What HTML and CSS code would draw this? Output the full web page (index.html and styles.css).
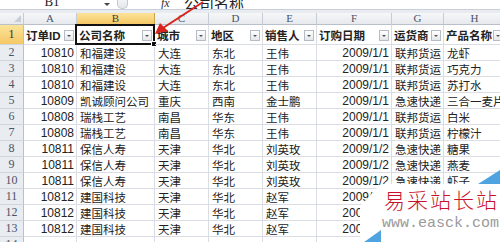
FILE: index.html
```html
<!DOCTYPE html>
<html lang="zh">
<head>
<meta charset="utf-8">
<link rel="stylesheet" href="styles.css">
</head>
<body>
<div class="app">
  <div class="fbar">
    <div class="namebox">B1</div>
    <div class="nb-arrow"></div>
    <div class="splitter"></div>
    <div class="fx">fx</div>
    <div class="fcontent">公司名称</div>
  </div>
  <div class="band"></div>
  <div class="sheet">
    <div class="ch corner"><span class="tri"></span></div>
    <div class="ch">A</div><div class="ch sel">B</div><div class="ch">C</div><div class="ch">D</div><div class="ch">E</div><div class="ch">F</div><div class="ch">G</div><div class="ch">H</div>

    <div class="rh sel">1</div>
    <div class="c hd"><span>订单ID</span><i class="dd"></i></div>
    <div class="c hd active"><span>公司名称</span><i class="dd"></i><b class="selbox"><b class="handle"></b></b></div>
    <div class="c hd"><span>城市</span><i class="dd"></i></div>
    <div class="c hd"><span>地区</span><i class="dd"></i></div>
    <div class="c hd"><span>销售人</span><i class="dd"></i></div>
    <div class="c hd"><span>订购日期</span><i class="dd"></i></div>
    <div class="c hd"><span>运货商</span><i class="dd"></i></div>
    <div class="c hd"><span>产品名称</span><i class="dd"></i></div>

    <div class="rh">2</div><div class="c n">10810</div><div class="c">和福建设</div><div class="c">大连</div><div class="c">东北</div><div class="c">王伟</div><div class="c n">2009/1/1</div><div class="c">联邦货运</div><div class="c">龙虾</div>
    <div class="rh">3</div><div class="c n">10810</div><div class="c">和福建设</div><div class="c">大连</div><div class="c">东北</div><div class="c">王伟</div><div class="c n">2009/1/1</div><div class="c">联邦货运</div><div class="c">巧克力</div>
    <div class="rh">4</div><div class="c n">10810</div><div class="c">和福建设</div><div class="c">大连</div><div class="c">东北</div><div class="c">王伟</div><div class="c n">2009/1/1</div><div class="c">联邦货运</div><div class="c">苏打水</div>
    <div class="rh">5</div><div class="c n">10809</div><div class="c">凯诚顾问公司</div><div class="c">重庆</div><div class="c">西南</div><div class="c">金士鹏</div><div class="c n">2009/1/1</div><div class="c">急速快递</div><div class="c">三合一麦片</div>
    <div class="rh">6</div><div class="c n">10808</div><div class="c">瑞栈工艺</div><div class="c">南昌</div><div class="c">华东</div><div class="c">王伟</div><div class="c n">2009/1/1</div><div class="c">联邦货运</div><div class="c">白米</div>
    <div class="rh">7</div><div class="c n">10808</div><div class="c">瑞栈工艺</div><div class="c">南昌</div><div class="c">华东</div><div class="c">王伟</div><div class="c n">2009/1/1</div><div class="c">联邦货运</div><div class="c">柠檬汁</div>
    <div class="rh">8</div><div class="c n">10811</div><div class="c">保信人寿</div><div class="c">天津</div><div class="c">华北</div><div class="c">刘英玫</div><div class="c n">2009/1/2</div><div class="c">急速快递</div><div class="c">糖果</div>
    <div class="rh">9</div><div class="c n">10811</div><div class="c">保信人寿</div><div class="c">天津</div><div class="c">华北</div><div class="c">刘英玫</div><div class="c n">2009/1/2</div><div class="c">急速快递</div><div class="c">燕麦</div>
    <div class="rh">10</div><div class="c n">10811</div><div class="c">保信人寿</div><div class="c">天津</div><div class="c">华北</div><div class="c">刘英玫</div><div class="c n">2009/1/2</div><div class="c">急速快递</div><div class="c">虾子</div>
    <div class="rh">11</div><div class="c n">10812</div><div class="c">建国科技</div><div class="c">天津</div><div class="c">华北</div><div class="c">赵军</div><div class="c n">2009/1/2</div><div class="c"></div><div class="c"></div>
    <div class="rh">12</div><div class="c n">10812</div><div class="c">建国科技</div><div class="c">天津</div><div class="c">华北</div><div class="c">赵军</div><div class="c n">2009/1/2</div><div class="c"></div><div class="c"></div>
    <div class="rh">13</div><div class="c n">10812</div><div class="c">建国科技</div><div class="c">天津</div><div class="c">华北</div><div class="c">赵军</div><div class="c n">2009/1/2</div><div class="c"></div><div class="c"></div>
    <div class="rh">14</div><div class="c n"></div><div class="c"></div><div class="c"></div><div class="c"></div><div class="c"></div><div class="c"></div><div class="c"></div><div class="c"></div>
  </div>

  <svg class="arrow" width="500" height="242" viewBox="0 0 500 242">
    <line x1="203" y1="2" x2="163" y2="28" stroke="#d8231f" stroke-width="2"/>
    <polygon points="155,34 160,23 168,31" fill="#d8231f"/>
  </svg>

  <div class="watermark">
    <svg class="wm-bg" width="140" height="75" viewBox="0 0 140 75">
      <polygon points="21,14 140,14 140,75 0,75 0,36" fill="#ffffff"/>
      <polygon points="118,14 140,14 140,0" fill="#4fa3e0"/>
      <polygon points="0,75 21,75 21,60" fill="#4fa3e0"/>
    </svg>
    <div class="wm-cn">易采站长站</div>
    <div class="wm-en">www.easck.com</div>
  </div>
</div>
</body>
</html>
```
FILE: styles.css
```css
html, body {
  margin: 0;
  padding: 0;
  background: #ffffff;
}
.app {
  position: relative;
  width: 500px;
  height: 242px;
  overflow: hidden;
  font-family: "Liberation Sans", "Noto Sans CJK SC", sans-serif;
}
.fbar {
  height: 9px;
  display: flex;
  align-items: flex-end;
  background: #ffffff;
  border-bottom: 1px solid #c9cfd8;
  overflow: hidden;
  color: #222;
}
.namebox {
  width: 104px;
  text-align: center;
  font-family: "Liberation Serif", serif;
  font-size: 13px;
  line-height: 13px;
  margin-bottom: 1px;
}
.nb-arrow {
  width: 0;
  height: 0;
  border-left: 3px solid transparent;
  border-right: 3px solid transparent;
  border-top: 3px solid #444;
  margin: 0 5px 3px 0;
}
.splitter {
  width: 9px;
  height: 10px;
  border: 1px solid #c4c9d0;
  border-top: none;
  border-radius: 0 0 5px 5px;
  background: linear-gradient(#f6f7f9, #e3e6ea);
  margin-left: 2px;
}
.fx {
  margin-left: 33px;
  width: 20px;
  font-family: "Liberation Serif", serif;
  font-style: italic;
  font-size: 12px;
  line-height: 12px;
  color: #333;
}
.fcontent {
  margin-left: 3px;
  font-family: "Noto Sans CJK SC", sans-serif;
  font-size: 15px;
  line-height: 15px;
  margin-bottom: -1px;
}
.band {
  height: 3px;
  background: #e8ebef;
}
.sheet {
  display: grid;
  grid-template-columns: 24px 53px 78px 54px 54px 54px 75px 52px 62px;
  grid-template-rows: 12px 20px repeat(13, 16px);
}
.ch {
  background: linear-gradient(#f6f7f9, #e6e9ed);
  border-right: 1px solid #c6ccd5;
  border-bottom: 1px solid #b9c0ca;
  font-family: "Liberation Serif", serif;
  font-size: 11px;
  line-height: 11px;
  color: #4a5468;
  text-align: center;
}
.ch.sel {
  background: linear-gradient(#fbe39a, #f5c865);
  color: #3c3c3c;
  border-right-color: #c9a44e;
}
.corner {
  position: relative;
}
.tri {
  position: absolute;
  right: 2px;
  bottom: 2px;
  width: 0;
  height: 0;
  border-left: 7px solid transparent;
  border-bottom: 7px solid #c9ced6;
}
.rh {
  background: #e9ecf0;
  border-right: 1px solid #b9c0ca;
  border-bottom: 1px solid #cfd5dd;
  font-family: "Liberation Serif", serif;
  font-size: 12px;
  color: #4a5468;
  display: flex;
  align-items: center;
  justify-content: center;
}
.rh.sel {
  background: linear-gradient(#fbe39a, #f5c865);
  color: #333;
}
.c {
  border-right: 1px solid #dadee4;
  border-bottom: 1px solid #dadee4;
  font-size: 11.5px;
  color: #222;
  display: flex;
  align-items: center;
  padding: 0 2px 0 3px;
  white-space: nowrap;
  overflow: hidden;
}
.c.n {
  justify-content: flex-end;
  font-size: 12px;
}
.c.hd {
  font-weight: bold;
  justify-content: space-between;
  padding: 0 2px 0 2px;
  position: relative;
  overflow: visible;
}
.dd {
  width: 8px;
  height: 9px;
  border: 1px solid #b6bcc5;
  background: linear-gradient(#ffffff, #e4e7eb);
  align-self: flex-end;
  margin-bottom: 3px;
  flex: none;
  display: flex;
  align-items: center;
  justify-content: center;
}
.dd::after {
  content: "";
  width: 0;
  height: 0;
  border-left: 2px solid transparent;
  border-right: 2px solid transparent;
  border-top: 2px solid #555;
}
.selbox {
  position: absolute;
  left: -2px;
  top: -1px;
  right: -1px;
  bottom: -1px;
  border: 2px solid #111;
}
.handle {
  position: absolute;
  right: -4px;
  bottom: -4px;
  width: 4px;
  height: 4px;
  background: #111;
  border: 1px solid #fff;
}
.arrow {
  position: absolute;
  left: 0;
  top: 0;
  pointer-events: none;
}
.watermark {
  position: absolute;
  left: 360px;
  top: 170px;
  width: 140px;
  height: 72px;
}
.wm-bg {
  position: absolute;
  left: 0;
  top: 0;
}
.wm-cn {
  position: absolute;
  left: 24px;
  top: 18px;
  font-family: "Noto Sans CJK SC", sans-serif;
  font-weight: 300;
  font-size: 21px;
  line-height: 22px;
  letter-spacing: 2px;
  color: #c8122c;
  white-space: nowrap;
}
.wm-en {
  position: absolute;
  left: 22px;
  top: 46px;
  font-family: "Liberation Mono", monospace;
  font-size: 15px;
  line-height: 16px;
  color: #9a9a9a;
  white-space: nowrap;
}
```
